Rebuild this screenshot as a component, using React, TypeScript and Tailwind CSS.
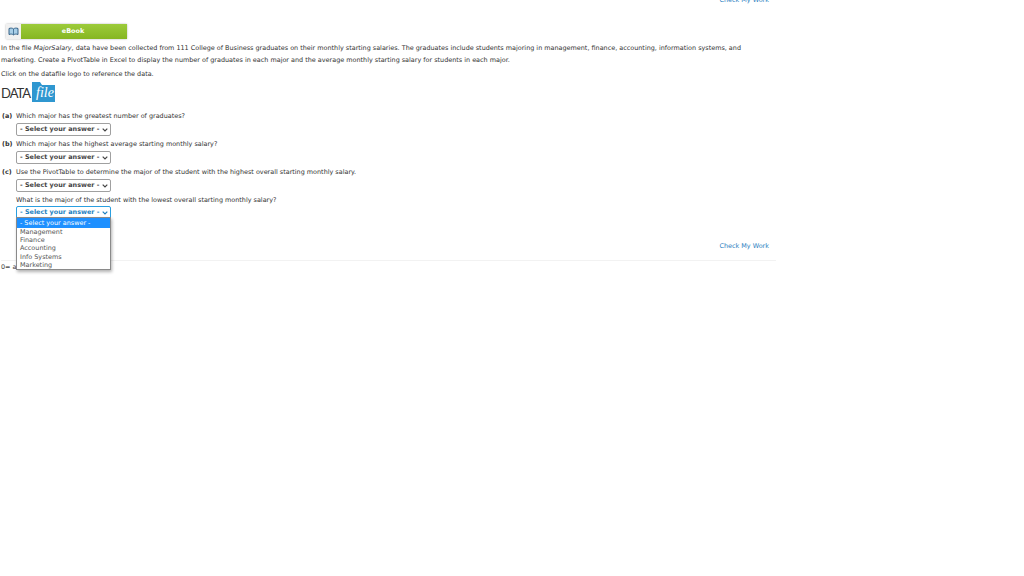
function Select({ focused, open }: { focused?: boolean; open?: boolean }) {
  return (
    <div className="relative ml-4 w-[95px]">
      <div className={`flex h-[13px] items-center justify-between rounded-[2px] border pl-[3px] pr-[2px] text-[6.45px] font-bold leading-none whitespace-nowrap ${focused ? "border-[#2a9fe0] text-[#1c7fc0]" : "border-[#a0a0a0] text-[#444444]"}`}>
        <span>- Select your answer -</span>
        <svg width="6" height="4" viewBox="0 0 6 4" fill="none" stroke="currentColor" strokeWidth="1.2">
          <path d="M0.7 0.7L3 3l2.300-2.300" />
        </svg>
      </div>
      {open && (
        <div className="absolute left-0 top-[11px] z-10 h-[53px] w-[95px] border border-[#8a8a8a] bg-white text-[6.45px] leading-[8.4px] text-[#555555] shadow-[1px_2px_3px_rgba(0,0,0,0.3)]">
          <div className="relative h-[10px] bg-[#1e90ff] pl-[3px] leading-[10px] text-white">- Select your answer -</div>
          <div className="mt-[-0.5px]">
            {["Management", "Finance", "Accounting", "Info Systems", "Marketing"].map((o) => (
              <div key={o} className="relative h-[8.4px] pl-[3px]">{o}</div>
            ))}
          </div>
        </div>
      )}
    </div>
  );
}

function Question({ label, text }: { label?: string; text: string }) {
  return (
    <div className="flex h-[8px] items-center whitespace-nowrap text-[6.45px] leading-[8px] text-[#333333]">
      {label ? <b className="w-4 shrink-0 pl-[2px]">{label}</b> : <span className="w-4 shrink-0" />}
      <span>{text}</span>
    </div>
  );
}

export default function App() {
  return (
    <div className="relative h-[576px] w-[1024px] overflow-hidden bg-white font-['DejaVu_Sans',sans-serif]">
      <div className="mt-[-4px] w-[769px] text-right text-[6.45px] leading-[8px] text-[#2d7fc1]">Check My Work</div>

      <div className="ml-[6px] mt-[20px] flex h-[15px] w-[121px] rounded-[1px] shadow-[0_0_2px_rgba(0,0,0,0.35)]">
        <div className="flex w-[15px] items-center justify-center bg-[#f1f1f1]">
          <svg width="11" height="9" viewBox="0 0 11 9" fill="none">
            <path d="M1 1.500c1.600-.6 3.300-.6 4.500.4 1.200-1 2.900-1 4.500-.4V7.500c-1.600-.6-3.300-.6-4.500.4C4.300 6.900 2.600 6.900 1 7.500z" fill="#a9cfe8" stroke="#26567e" strokeWidth="0.9" />
            <path d="M5.500 2v5.800" stroke="#26567e" strokeWidth="0.7" />
          </svg>
        </div>
        <div className="flex flex-1 items-center justify-center bg-gradient-to-b from-[#9ccb3a] to-[#86b621] pr-[2px] text-[6.45px] font-bold text-white">eBook</div>
      </div>

      <div className="ml-[1px] mt-[3px] w-[760px] text-[6.45px] leading-[12px] text-[#333333]">
        <p className="whitespace-nowrap">In the file <i>MajorSalary</i>, data have been collected from 111 College of Business graduates on their monthly starting salaries. The graduates include students majoring in management, finance, accounting, information systems, and</p>
        <p className="whitespace-nowrap">marketing. Create a PivotTable in Excel to display the number of graduates in each major and the average monthly starting salary for students in each major.</p>
        <p className="mt-[2px] whitespace-nowrap">Click on the datafile logo to reference the data.</p>
      </div>

      <div className="ml-[1px] mt-[2px] flex h-[21px] items-end">
        <span className="mb-[2px] font-['Lato',sans-serif] text-[13px] leading-[16px] tracking-[-1px] text-[#333333]">DATA</span>
        <div className="relative ml-[1px] h-[21px] w-[24px]">
          <svg className="absolute inset-0" width="24" height="21" viewBox="0 0 24 21">
            <path d="M1 0h8l2 3h13v17H1z" fill="#2f97d0" />
          </svg>
          <span className="absolute left-[5px] top-[3px] font-['Liberation_Serif',serif] text-[14px] italic leading-[16px] text-white">file</span>
        </div>
      </div>

      <div className="mt-[9px]">
        <Question label="(a)" text="Which major has the greatest number of graduates?" />
        <div className="mt-[3px]"><Select /></div>
        <div className="mt-[4px]"><Question label="(b)" text="Which major has the highest average starting monthly salary?" /></div>
        <div className="mt-[3px]"><Select /></div>
        <div className="mt-[4px]"><Question label="(c)" text="Use the PivotTable to determine the major of the student with the highest overall starting monthly salary." /></div>
        <div className="mt-[3px]"><Select /></div>
        <div className="mt-[4px]"><Question text="What is the major of the student with the lowest overall starting monthly salary?" /></div>
        <div className="mt-[2px]"><Select focused open /></div>
      </div>

      <div className="mt-[23px] w-[769px] text-right text-[6.45px] leading-[8px] text-[#2d7fc1]">Check My Work</div>
      <div className="ml-[1px] mt-[10px] w-[775px] border-t border-[#f2f2f2]" />
      <div className="ml-[1px] mt-[2px] text-[6.45px] leading-[8px] text-[#444444]">0= a</div>
    </div>
  );
}
